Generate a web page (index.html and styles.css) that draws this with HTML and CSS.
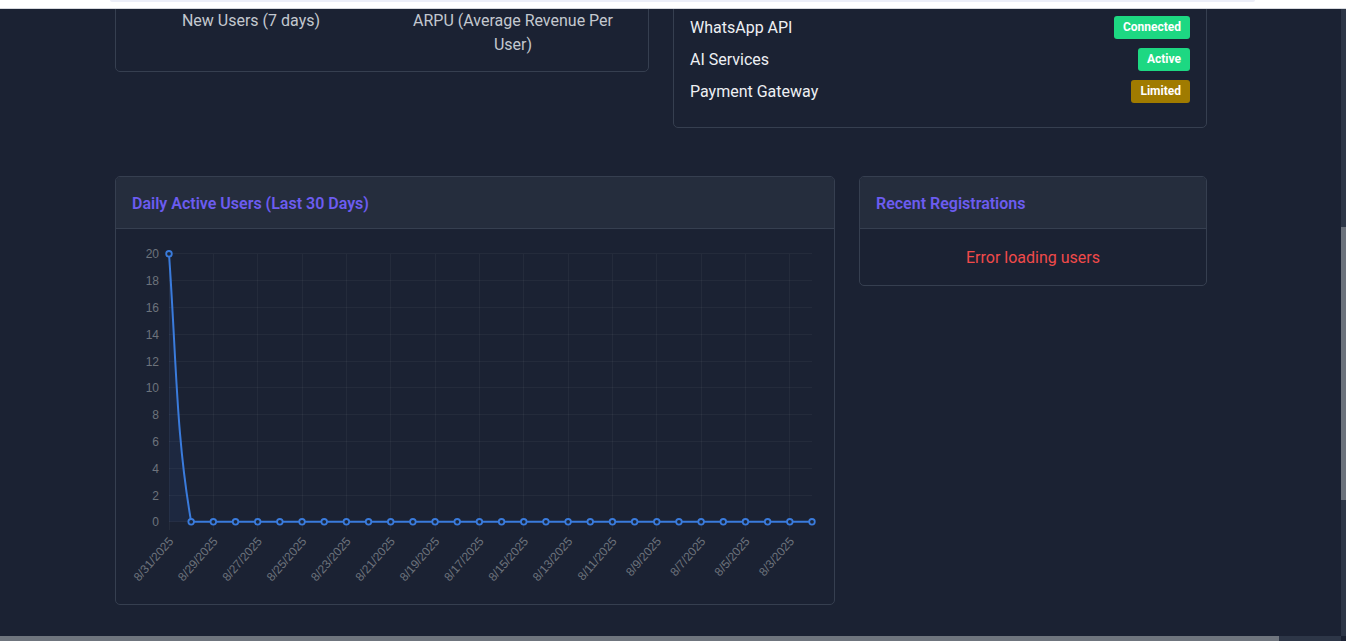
FILE: index.html
```html
<!DOCTYPE html>
<html lang="en">
<head>
<meta charset="utf-8">
<title>Admin Dashboard</title>
<link rel="stylesheet" href="styles.css">
</head>
<body>
<div class="topbar"><div class="topbar-pill"></div></div>

<main class="page">
  <div class="row">
    <section class="card card-half card-metrics">
      <div class="card-body">
        <div class="stats">
          <div class="stat">
            <div class="stat-label">New Users (7 days)</div>
          </div>
          <div class="stat">
            <div class="stat-label">ARPU (Average Revenue Per User)</div>
          </div>
        </div>
      </div>
    </section>

    <section class="card card-half card-status">
      <div class="card-body">
        <div class="status-row"><span class="status-label">WhatsApp API</span><span class="badge badge-green">Connected</span></div>
        <div class="status-row"><span class="status-label">AI Services</span><span class="badge badge-green">Active</span></div>
        <div class="status-row"><span class="status-label">Payment Gateway</span><span class="badge badge-yellow">Limited</span></div>
      </div>
    </section>
  </div>

  <div class="row">
    <section class="card card-wide">
      <header class="card-header"><h5 class="card-title">Daily Active Users (Last 30 Days)</h5></header>
      <div class="card-body">
        <svg class="chart" width="686" height="343" viewBox="0 0 686 343">
          <g class="grid">
            <line x1="37" y1="276.8" x2="680" y2="276.8"/>
            <line x1="37" y1="250" x2="680" y2="250"/>
            <line x1="37" y1="223.2" x2="680" y2="223.2"/>
            <line x1="37" y1="196.4" x2="680" y2="196.4"/>
            <line x1="37" y1="169.6" x2="680" y2="169.6"/>
            <line x1="37" y1="142.8" x2="680" y2="142.8"/>
            <line x1="37" y1="116" x2="680" y2="116"/>
            <line x1="37" y1="89.2" x2="680" y2="89.2"/>
            <line x1="37" y1="62.4" x2="680" y2="62.4"/>
            <line x1="37" y1="35.6" x2="680" y2="35.6"/>
            <line x1="37" y1="8.8" x2="680" y2="8.8"/>
            <line x1="37" y1="8.8" x2="37" y2="284.8"/>
            <line x1="81.34" y1="8.8" x2="81.34" y2="284.8"/>
            <line x1="125.69" y1="8.8" x2="125.69" y2="284.8"/>
            <line x1="170.03" y1="8.8" x2="170.03" y2="284.8"/>
            <line x1="214.38" y1="8.8" x2="214.38" y2="284.8"/>
            <line x1="258.72" y1="8.8" x2="258.72" y2="284.8"/>
            <line x1="303.06" y1="8.8" x2="303.06" y2="284.8"/>
            <line x1="347.41" y1="8.8" x2="347.41" y2="284.8"/>
            <line x1="391.75" y1="8.8" x2="391.75" y2="284.8"/>
            <line x1="436.1" y1="8.8" x2="436.1" y2="284.8"/>
            <line x1="480.44" y1="8.8" x2="480.44" y2="284.8"/>
            <line x1="524.78" y1="8.8" x2="524.78" y2="284.8"/>
            <line x1="569.13" y1="8.8" x2="569.13" y2="284.8"/>
            <line x1="613.47" y1="8.8" x2="613.47" y2="284.8"/>
            <line x1="657.82" y1="8.8" x2="657.82" y2="284.8"/>
          </g>
          <g class="ylabels">
            <text x="27" y="277.3">0</text>
            <text x="27" y="250.5">2</text>
            <text x="27" y="223.7">4</text>
            <text x="27" y="196.9">6</text>
            <text x="27" y="170.1">8</text>
            <text x="27" y="143.3">10</text>
            <text x="27" y="116.5">12</text>
            <text x="27" y="89.7">14</text>
            <text x="27" y="62.9">16</text>
            <text x="27" y="36.1">18</text>
            <text x="27" y="9.3">20</text>
          </g>
          <g class="xlabels">
            <text x="39" y="294" transform="rotate(-49 39 294)">8/31/2025</text>
            <text x="83.34" y="294" transform="rotate(-49 83.34 294)">8/29/2025</text>
            <text x="127.69" y="294" transform="rotate(-49 127.69 294)">8/27/2025</text>
            <text x="172.03" y="294" transform="rotate(-49 172.03 294)">8/25/2025</text>
            <text x="216.38" y="294" transform="rotate(-49 216.38 294)">8/23/2025</text>
            <text x="260.72" y="294" transform="rotate(-49 260.72 294)">8/21/2025</text>
            <text x="305.06" y="294" transform="rotate(-49 305.06 294)">8/19/2025</text>
            <text x="349.41" y="294" transform="rotate(-49 349.41 294)">8/17/2025</text>
            <text x="393.75" y="294" transform="rotate(-49 393.75 294)">8/15/2025</text>
            <text x="438.1" y="294" transform="rotate(-49 438.1 294)">8/13/2025</text>
            <text x="482.44" y="294" transform="rotate(-49 482.44 294)">8/11/2025</text>
            <text x="526.78" y="294" transform="rotate(-49 526.78 294)">8/9/2025</text>
            <text x="571.13" y="294" transform="rotate(-49 571.13 294)">8/7/2025</text>
            <text x="615.47" y="294" transform="rotate(-49 615.47 294)">8/5/2025</text>
            <text x="659.82" y="294" transform="rotate(-49 659.82 294)">8/3/2025</text>
          </g>
          <path class="area" d="M37,8.8 C44.5,116 44,190 59.17,276.8 L37,276.8 Z"/>
          <path class="line" d="M37,8.8 C44.5,116 44,190 59.17,276.8 L679.99,276.8"/>
          <g class="points">
            <circle cx="37" cy="8.8" r="2.8"/>
            <circle cx="59.17" cy="276.8" r="2.8"/>
            <circle cx="81.34" cy="276.8" r="2.8"/>
            <circle cx="103.52" cy="276.8" r="2.8"/>
            <circle cx="125.69" cy="276.8" r="2.8"/>
            <circle cx="147.86" cy="276.8" r="2.8"/>
            <circle cx="170.03" cy="276.8" r="2.8"/>
            <circle cx="192.2" cy="276.8" r="2.8"/>
            <circle cx="214.38" cy="276.8" r="2.8"/>
            <circle cx="236.55" cy="276.8" r="2.8"/>
            <circle cx="258.72" cy="276.8" r="2.8"/>
            <circle cx="280.89" cy="276.8" r="2.8"/>
            <circle cx="303.06" cy="276.8" r="2.8"/>
            <circle cx="325.24" cy="276.8" r="2.8"/>
            <circle cx="347.41" cy="276.8" r="2.8"/>
            <circle cx="369.58" cy="276.8" r="2.8"/>
            <circle cx="391.75" cy="276.8" r="2.8"/>
            <circle cx="413.92" cy="276.8" r="2.8"/>
            <circle cx="436.1" cy="276.8" r="2.8"/>
            <circle cx="458.27" cy="276.8" r="2.8"/>
            <circle cx="480.44" cy="276.8" r="2.8"/>
            <circle cx="502.61" cy="276.8" r="2.8"/>
            <circle cx="524.78" cy="276.8" r="2.8"/>
            <circle cx="546.96" cy="276.8" r="2.8"/>
            <circle cx="569.13" cy="276.8" r="2.8"/>
            <circle cx="591.3" cy="276.8" r="2.8"/>
            <circle cx="613.47" cy="276.8" r="2.8"/>
            <circle cx="635.64" cy="276.8" r="2.8"/>
            <circle cx="657.82" cy="276.8" r="2.8"/>
            <circle cx="679.99" cy="276.8" r="2.8"/>
          </g>
        </svg>
      </div>
    </section>

    <section class="card card-narrow">
      <header class="card-header"><h5 class="card-title">Recent Registrations</h5></header>
      <div class="card-body">
        <p class="error-text">Error loading users</p>
      </div>
    </section>
  </div>
</main>

<div class="vscroll"><div class="vthumb"></div></div>
<div class="hscroll"><div class="hthumb"></div></div>
</body>
</html>
```

FILE: styles.css
```css
* { box-sizing: border-box; }

html, body {
  margin: 0;
  height: 100%;
}

body {
  background: #1b2233;
  color: #eef0f3;
  font-family: "Segoe UI", Roboto, "Liberation Sans", sans-serif;
  font-size: 16px;
  line-height: 1.5;
  overflow: hidden;
}

/* white header strip at top (sticky nav bottom) */
.topbar {
  position: fixed;
  top: 0;
  left: 0;
  right: 0;
  height: 9px;
  background: #ffffff;
  border-bottom: 1px solid #d6d8dd;
  z-index: 5;
}

.topbar-pill {
  margin-left: 110px;
  width: 1145px;
  height: 2px;
  background: #eceef8;
  border-radius: 0 0 8px 8px;
}

.page {
  margin-top: 2px;
  margin-left: 115px;
  width: 1092px;
  display: flex;
  flex-direction: column;
  gap: 48px;
}

.row {
  display: flex;
  gap: 24px;
  align-items: flex-start;
}

.card {
  border: 1px solid #363f50;
  border-radius: 5px;
  background: #1b2233;
  overflow: hidden;
}

.card-half { width: 534px; }
.card-wide { width: 720px; }
.card-narrow { width: 348px; }

.card-header {
  background: #252d3d;
  padding: 17px 16px 15px;
  border-bottom: 1px solid #363f50;
}

.card-title {
  margin: 0;
  font-size: 16px;
  line-height: 1.2;
  font-weight: 600;
  color: #6c5cf0;
}

.card-body {
  padding: 16px;
}

/* metrics */
.card-metrics .card-body {
  padding-top: 5px;
  padding-bottom: 15px;
}

.stats {
  display: grid;
  grid-template-columns: 1fr 1fr;
  margin: 0 -12px;
}

.stat {
  padding: 0 12px;
  text-align: center;
}

.stat-label {
  color: #c3c8cf;
  line-height: 24px;
  padding-top: 1px;
  margin-bottom: -1px;
}

/* status list */
.card-status .card-body {
  padding-top: 12px;
}

.status-row {
  display: flex;
  justify-content: space-between;
  align-items: center;
  height: 24px;
  margin-bottom: 8px;
}

.status-label {
  padding-top: 2px;
}

.badge {
  display: inline-block;
  font-size: 12px;
  font-weight: 700;
  line-height: 15px;
  padding: 4px 9px;
  border-radius: 3px;
  color: #ffffff;
}

.badge-green { background: #1dd882; }
.badge-yellow { background: #a07b00; }

/* chart */
.chart {
  display: block;
}

.grid line {
  stroke: rgba(255, 255, 255, 0.045);
  stroke-width: 1;
  shape-rendering: crispEdges;
}

.ylabels text,
.xlabels text {
  font-family: "Liberation Sans", Arial, sans-serif;
  font-size: 12px;
  fill: #6d737c;
  text-anchor: end;
  dominant-baseline: central;
}

.area {
  fill: rgba(59, 130, 246, 0.07);
}

.line {
  fill: none;
  stroke: #3a7bdc;
  stroke-width: 2;
}

.points circle {
  fill: #1c2638;
  stroke: #3a7bdc;
  stroke-width: 1.8;
}

/* recent */
.error-text {
  margin: 0;
  text-align: center;
  color: #f04a4a;
  line-height: 24px;
  padding-top: 1px;
  margin-bottom: -1px;
}

/* fake scrollbars (overlay) */
.vscroll {
  position: fixed;
  top: 9px;
  right: 0;
  bottom: 5px;
  width: 5px;
  background: #2d3647;
  z-index: 4;
}

.vthumb {
  margin-top: 218px;
  height: 273px;
  background: #6b717b;
}

.hscroll {
  position: fixed;
  left: 0;
  right: 5px;
  bottom: 0;
  height: 5px;
  background: #2d3647;
  z-index: 4;
}

.hthumb {
  width: 1279px;
  height: 5px;
  background: #6f757e;
}
```
